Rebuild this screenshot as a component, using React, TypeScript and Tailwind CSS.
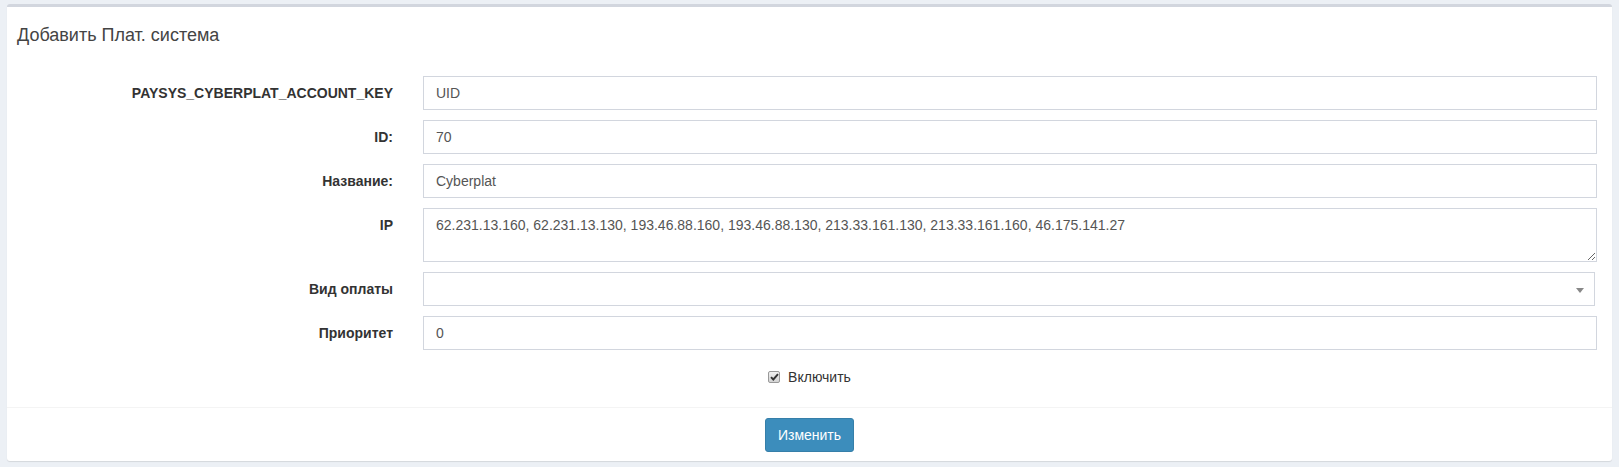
import React from 'react';

const fields = [
  { label: 'PAYSYS_CYBERPLAT_ACCOUNT_KEY', value: 'UID' },
  { label: 'ID:', value: '70' },
  { label: 'Название:', value: 'Cyberplat' },
];

const ips =
  '62.231.13.160, 62.231.13.130, 193.46.88.160, 193.46.88.130, 213.33.161.130, 213.33.161.160, 46.175.141.27';

function Row({ label, children, top = false }: { label: string; children: React.ReactNode; top?: boolean }) {
  return (
    <div className="flex">
      <label
        className={`w-[387px] shrink-0 pr-[1px] text-right text-[14px] font-bold text-[#333] leading-[20px] ${
          top ? 'pt-[7px]' : 'self-center'
        }`}
      >
        {label}
      </label>
      <div className="ml-[29px] flex-1">{children}</div>
    </div>
  );
}

export default function App() {
  return (
    <div
      className="min-h-[467px] bg-[#ecf0f5] pt-[4px] pl-[7px] pr-[7px]"
      style={{ fontFamily: '"Liberation Sans", Arial, sans-serif' }}
    >
      <div className="rounded-[3px] border-t-[3px] border-[#d2d6de] bg-white shadow-[0_1px_1px_rgba(0,0,0,0.1)]">
        {/* header */}
        <div className="h-[59px] pl-[10px] pt-[18px]">
          <h3 className="text-[18px] leading-[20px] text-[#444]">Добавить Плат. система</h3>
        </div>

        {/* body */}
        <div className="pt-[10px] pr-[15px]">
          <div className="flex flex-col gap-[10px]">
            {fields.map((f) => (
              <Row key={f.label} label={f.label}>
                <input
                  readOnly
                  value={f.value}
                  className="block h-[34px] w-full border border-[#d2d6de] px-[12px] text-[14px] text-[#555] outline-none"
                />
              </Row>
            ))}
            <Row label="IP" top>
              <textarea
                readOnly
                value={ips}
                className="block h-[54px] w-full border border-[#d2d6de] px-[12px] py-[6px] text-[14px] leading-[20px] text-[#555] outline-none"
              />
            </Row>
            <Row label="Вид оплаты">
              <div className="relative mr-[2px] h-[34px] border border-[#d2d6de]">
                <span className="absolute right-[10px] top-[15px] h-0 w-0 border-x-[4px] border-t-[5px] border-x-transparent border-t-[#888]" />
              </div>
            </Row>
            <Row label="Приоритет">
              <input
                readOnly
                value="0"
                className="block h-[34px] w-full border border-[#d2d6de] px-[12px] text-[14px] text-[#555] outline-none"
              />
            </Row>
          </div>

          <div className="mt-[10px] flex h-[34px] items-center justify-center pl-[15px]">
            <span className="flex h-[12px] w-[12px] items-center justify-center rounded-[2px] border border-[#999] bg-gradient-to-b from-[#f0f0f0] to-[#d4d4d4]">
              <svg width="9" height="8" viewBox="0 0 9 8">
                <path d="M1 4.2 L3.3 6.5 L8 1.2" fill="none" stroke="#333" strokeWidth="1.9" />
              </svg>
            </span>
            <span className="ml-[8px] text-[14px] leading-[20px] text-[#333]">Включить</span>
          </div>
          <div className="h-[13px]" />
        </div>

        {/* footer */}
        <div className="flex justify-center border-t border-[#f4f4f4] pt-[10px] pb-[9px]">
          <button className="h-[34px] w-[89px] rounded-[3px] border border-[#367fa9] bg-[#3c8dbc] text-[14px] text-white">
            Изменить
          </button>
        </div>
      </div>
    </div>
  );
}
